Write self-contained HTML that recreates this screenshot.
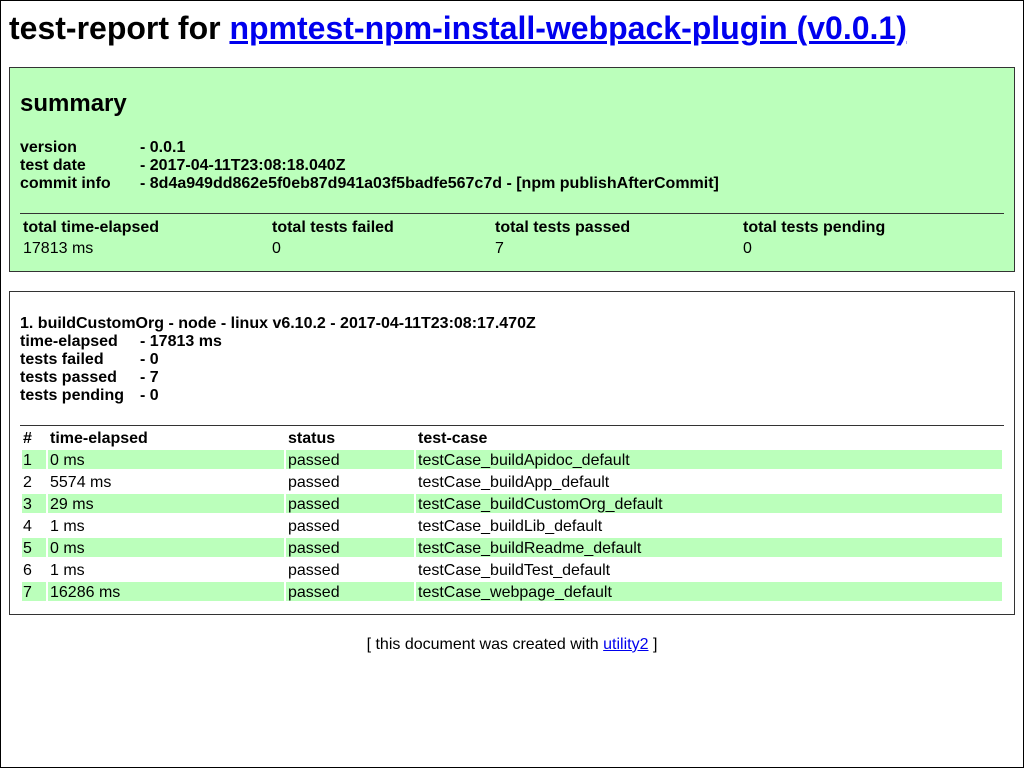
<!DOCTYPE html>
<html><head><style>
html,body{margin:0;padding:0}
body{width:1022px;height:766px;border:1px solid #000;position:relative;font-family:"Liberation Sans",Arial,sans-serif;color:#000;overflow:hidden}
#w{position:absolute;left:-1px;top:-1px;width:1024px;height:768px}
.a{position:absolute;white-space:nowrap;line-height:18px;font-size:16px;padding-top:2px}
.b{font-weight:bold}
.box{position:absolute;border:1px solid #333;box-sizing:border-box}
.hr{position:absolute;height:0;border-top:1px solid #333}
.g{position:absolute;background:#bfb;height:19px}
a{color:#00e}
</style></head><body><div id="w">
<div class="a b" style="left:9px;top:7px;font-size:32px;line-height:38px">test-report for <a href="#">npmtest-npm-install-webpack-plugin (v0.0.1)</a></div>

<div class="box" style="left:9px;top:67px;width:1006px;height:205px;background:#bfb"></div>
<div class="a b" style="left:20px;top:88px;font-size:24px;line-height:28px">summary</div>
<div class="a b" style="left:20px;top:137px">version</div><div class="a b" style="left:140px;top:137px">- 0.0.1</div>
<div class="a b" style="left:20px;top:155px">test date</div><div class="a b" style="left:140px;top:155px">- 2017-04-11T23:08:18.040Z</div>
<div class="a b" style="left:20px;top:173px">commit info</div><div class="a b" style="left:140px;top:173px">- 8d4a949dd862e5f0eb87d941a03f5badfe567c7d - [npm publishAfterCommit]</div>
<div class="hr" style="left:20px;top:213px;width:984px"></div>
<div class="a b" style="left:23px;top:217px">total time-elapsed</div>
<div class="a b" style="left:272px;top:217px">total tests failed</div>
<div class="a b" style="left:495px;top:217px">total tests passed</div>
<div class="a b" style="left:743px;top:217px">total tests pending</div>
<div class="a" style="left:23px;top:238px">17813 ms</div>
<div class="a" style="left:272px;top:238px">0</div>
<div class="a" style="left:495px;top:238px">7</div>
<div class="a" style="left:743px;top:238px">0</div>

<div class="box" style="left:9px;top:291px;width:1006px;height:324px;background:#fff"></div>
<div class="a b" style="left:20px;top:313px">1. buildCustomOrg - node - linux v6.10.2 - 2017-04-11T23:08:17.470Z</div>
<div class="a b" style="left:20px;top:331px">time-elapsed</div><div class="a b" style="left:140px;top:331px">- 17813 ms</div>
<div class="a b" style="left:20px;top:349px">tests failed</div><div class="a b" style="left:140px;top:349px">- 0</div>
<div class="a b" style="left:20px;top:367px">tests passed</div><div class="a b" style="left:140px;top:367px">- 7</div>
<div class="a b" style="left:20px;top:385px">tests pending</div><div class="a b" style="left:140px;top:385px">- 0</div>
<div class="hr" style="left:20px;top:425px;width:984px"></div>
<div class="a b" style="left:23px;top:428px">#</div>
<div class="a b" style="left:50px;top:428px">time-elapsed</div>
<div class="a b" style="left:288px;top:428px">status</div>
<div class="a b" style="left:418px;top:428px">test-case</div>

<div class="g" style="left:22px;top:450px;width:24px"></div><div class="g" style="left:48px;top:450px;width:236px"></div><div class="g" style="left:286px;top:450px;width:128px"></div><div class="g" style="left:416px;top:450px;width:586px"></div>
<div class="g" style="left:22px;top:494px;width:24px"></div><div class="g" style="left:48px;top:494px;width:236px"></div><div class="g" style="left:286px;top:494px;width:128px"></div><div class="g" style="left:416px;top:494px;width:586px"></div>
<div class="g" style="left:22px;top:538px;width:24px"></div><div class="g" style="left:48px;top:538px;width:236px"></div><div class="g" style="left:286px;top:538px;width:128px"></div><div class="g" style="left:416px;top:538px;width:586px"></div>
<div class="g" style="left:22px;top:582px;width:24px"></div><div class="g" style="left:48px;top:582px;width:236px"></div><div class="g" style="left:286px;top:582px;width:128px"></div><div class="g" style="left:416px;top:582px;width:586px"></div>

<div class="a" style="left:23px;top:450px">1</div><div class="a" style="left:50px;top:450px">0 ms</div><div class="a" style="left:288px;top:450px">passed</div><div class="a" style="left:418px;top:450px">testCase_buildApidoc_default</div>
<div class="a" style="left:23px;top:472px">2</div><div class="a" style="left:50px;top:472px">5574 ms</div><div class="a" style="left:288px;top:472px">passed</div><div class="a" style="left:418px;top:472px">testCase_buildApp_default</div>
<div class="a" style="left:23px;top:494px">3</div><div class="a" style="left:50px;top:494px">29 ms</div><div class="a" style="left:288px;top:494px">passed</div><div class="a" style="left:418px;top:494px">testCase_buildCustomOrg_default</div>
<div class="a" style="left:23px;top:516px">4</div><div class="a" style="left:50px;top:516px">1 ms</div><div class="a" style="left:288px;top:516px">passed</div><div class="a" style="left:418px;top:516px">testCase_buildLib_default</div>
<div class="a" style="left:23px;top:538px">5</div><div class="a" style="left:50px;top:538px">0 ms</div><div class="a" style="left:288px;top:538px">passed</div><div class="a" style="left:418px;top:538px">testCase_buildReadme_default</div>
<div class="a" style="left:23px;top:560px">6</div><div class="a" style="left:50px;top:560px">1 ms</div><div class="a" style="left:288px;top:560px">passed</div><div class="a" style="left:418px;top:560px">testCase_buildTest_default</div>
<div class="a" style="left:23px;top:582px">7</div><div class="a" style="left:50px;top:582px">16286 ms</div><div class="a" style="left:288px;top:582px">passed</div><div class="a" style="left:418px;top:582px">testCase_webpage_default</div>

<div class="a" style="left:0;width:1024px;text-align:center;top:634px">[ this document was created with <a href="#">utility2</a> ]</div>
</div></body></html>
